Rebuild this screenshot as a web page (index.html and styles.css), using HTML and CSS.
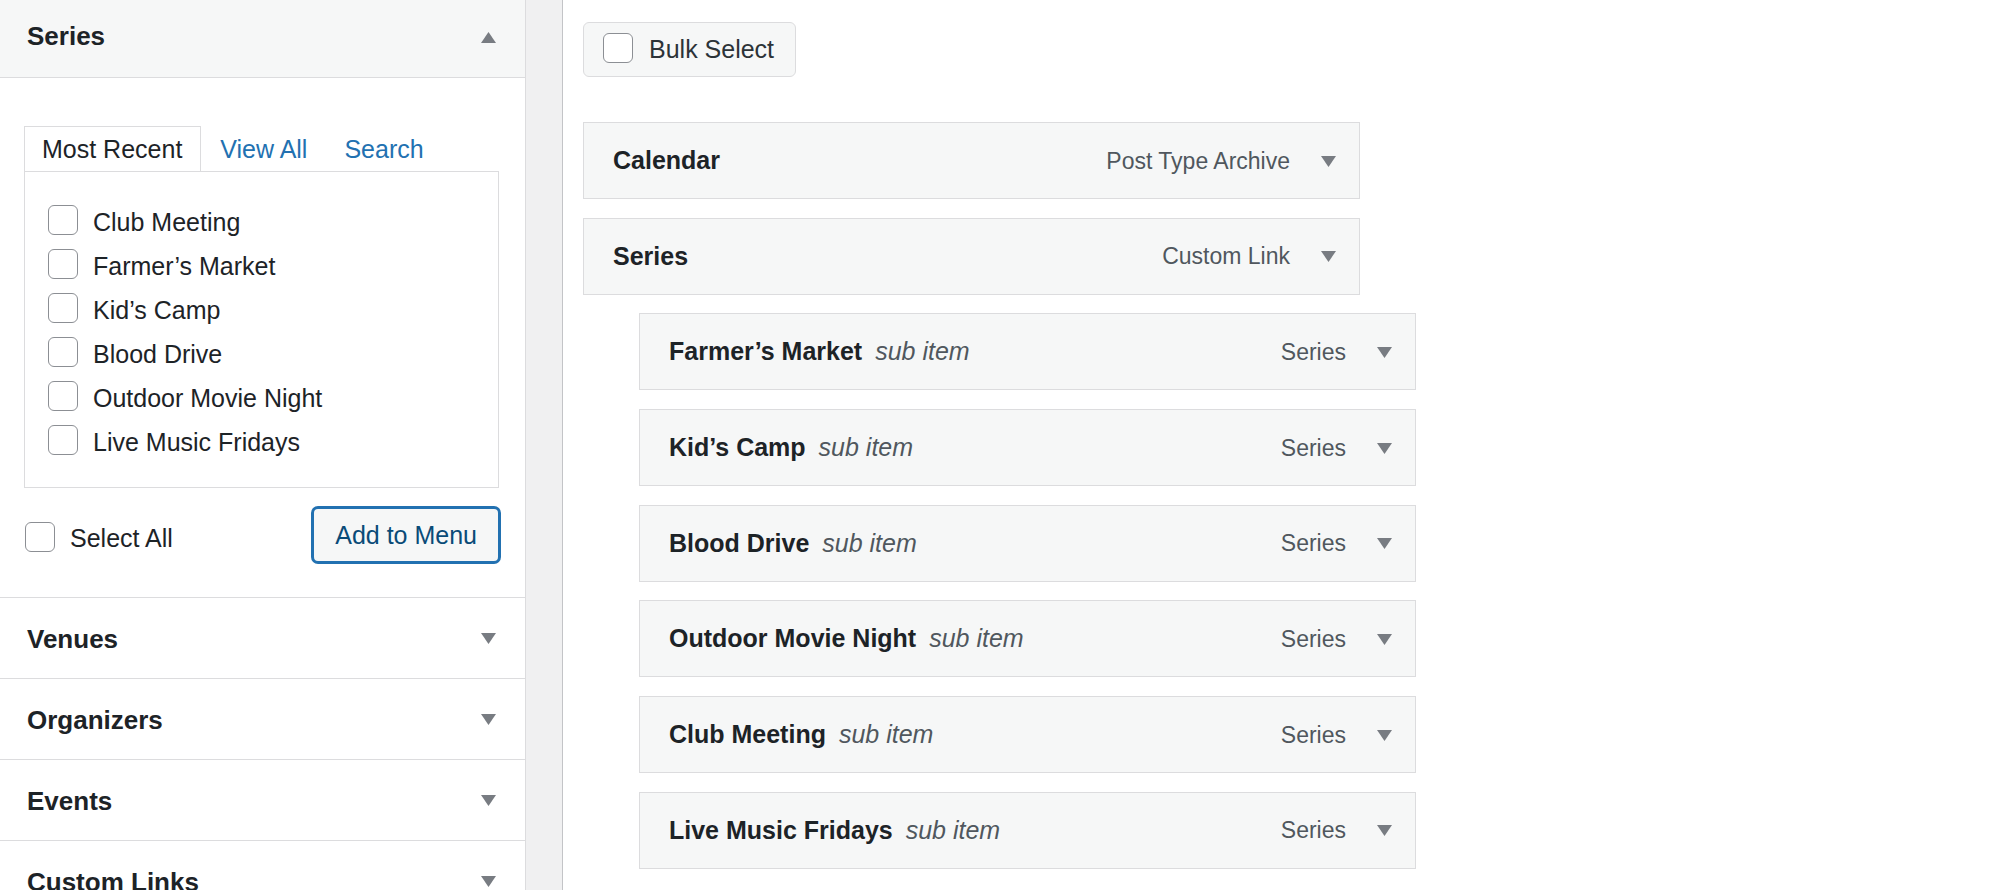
FILE: index.html
```html
<!DOCTYPE html>
<html lang="en">
<head>
<meta charset="utf-8">
<title>Menus</title>
<link rel="stylesheet" href="styles.css">
</head>
<body>
<div class="page">
  <aside class="sidebar">
    <section class="acc open">
      <div class="acc-head">
        <h3 class="acc-title">Series</h3>
        <svg class="tri" width="15" height="11" viewBox="0 0 15 11"><path d="M0 11H15L7.5 0Z" fill="#787c82"/></svg>
      </div>
      <div class="acc-body">
        <div class="tabs">
          <span class="tab active">Most Recent</span>
          <a class="tab link">View All</a>
          <a class="tab link second">Search</a>
        </div>
        <div class="panel">
          <label class="row"><input type="checkbox" class="cb"><span>Club Meeting</span></label>
          <label class="row"><input type="checkbox" class="cb"><span>Farmer’s Market</span></label>
          <label class="row"><input type="checkbox" class="cb"><span>Kid’s Camp</span></label>
          <label class="row"><input type="checkbox" class="cb"><span>Blood Drive</span></label>
          <label class="row"><input type="checkbox" class="cb"><span>Outdoor Movie Night</span></label>
          <label class="row"><input type="checkbox" class="cb"><span>Live Music Fridays</span></label>
        </div>
        <div class="footer">
          <label class="select-all"><input type="checkbox" class="cb"><span>Select All</span></label>
          <button class="add-btn" type="button">Add to Menu</button>
        </div>
      </div>
    </section>
    <section class="acc">
      <div class="acc-head closed">
        <h3 class="acc-title">Venues</h3>
        <svg class="tri" width="15" height="11" viewBox="0 0 15 11"><path d="M0 0H15L7.5 11Z" fill="#787c82"/></svg>
      </div>
    </section>
    <section class="acc">
      <div class="acc-head closed">
        <h3 class="acc-title">Organizers</h3>
        <svg class="tri" width="15" height="11" viewBox="0 0 15 11"><path d="M0 0H15L7.5 11Z" fill="#787c82"/></svg>
      </div>
    </section>
    <section class="acc">
      <div class="acc-head closed">
        <h3 class="acc-title">Events</h3>
        <svg class="tri" width="15" height="11" viewBox="0 0 15 11"><path d="M0 0H15L7.5 11Z" fill="#787c82"/></svg>
      </div>
    </section>
    <section class="acc">
      <div class="acc-head closed">
        <h3 class="acc-title">Custom Links</h3>
        <svg class="tri" width="15" height="11" viewBox="0 0 15 11"><path d="M0 0H15L7.5 11Z" fill="#787c82"/></svg>
      </div>
    </section>
  </aside>
  <div class="gutter"></div>
  <main class="main">
    <label class="bulk"><input type="checkbox" class="cb"><span>Bulk Select</span></label>
    <ul class="menu">
      <li class="item"><span class="item-title">Calendar</span><span class="item-ctrl"><span class="item-type">Post Type Archive</span><svg width="15" height="11" viewBox="0 0 15 11"><path d="M0 0H15L7.5 11Z" fill="#787c82"/></svg></span></li>
      <li class="item"><span class="item-title">Series</span><span class="item-ctrl"><span class="item-type">Custom Link</span><svg width="15" height="11" viewBox="0 0 15 11"><path d="M0 0H15L7.5 11Z" fill="#787c82"/></svg></span></li>
      <li class="item sub"><span class="item-title">Farmer’s Market<em class="subtag">sub item</em></span><span class="item-ctrl"><span class="item-type">Series</span><svg width="15" height="11" viewBox="0 0 15 11"><path d="M0 0H15L7.5 11Z" fill="#787c82"/></svg></span></li>
      <li class="item sub"><span class="item-title">Kid’s Camp<em class="subtag">sub item</em></span><span class="item-ctrl"><span class="item-type">Series</span><svg width="15" height="11" viewBox="0 0 15 11"><path d="M0 0H15L7.5 11Z" fill="#787c82"/></svg></span></li>
      <li class="item sub"><span class="item-title">Blood Drive<em class="subtag">sub item</em></span><span class="item-ctrl"><span class="item-type">Series</span><svg width="15" height="11" viewBox="0 0 15 11"><path d="M0 0H15L7.5 11Z" fill="#787c82"/></svg></span></li>
      <li class="item sub"><span class="item-title">Outdoor Movie Night<em class="subtag">sub item</em></span><span class="item-ctrl"><span class="item-type">Series</span><svg width="15" height="11" viewBox="0 0 15 11"><path d="M0 0H15L7.5 11Z" fill="#787c82"/></svg></span></li>
      <li class="item sub"><span class="item-title">Club Meeting<em class="subtag">sub item</em></span><span class="item-ctrl"><span class="item-type">Series</span><svg width="15" height="11" viewBox="0 0 15 11"><path d="M0 0H15L7.5 11Z" fill="#787c82"/></svg></span></li>
      <li class="item sub"><span class="item-title">Live Music Fridays<em class="subtag">sub item</em></span><span class="item-ctrl"><span class="item-type">Series</span><svg width="15" height="11" viewBox="0 0 15 11"><path d="M0 0H15L7.5 11Z" fill="#787c82"/></svg></span></li>
    </ul>
  </main>
</div>
</body>
</html>
```
FILE: styles.css
```css
* { box-sizing: border-box; }
html, body { margin: 0; padding: 0; }
body {
  background: #fff;
  color: #1d2327;
  font-family: "Liberation Sans", Arial, sans-serif;
  font-size: 25px;
  line-height: 30px;
}
.page {
  display: flex;
  height: 890px;
  overflow: hidden;
}

/* Sidebar */
.sidebar {
  width: 526px;
  flex: none;
  border-right: 1px solid #dcdcde;
  background: #fff;
}
.acc { border-bottom: 1px solid #dcdcde; }
.acc-head {
  display: flex;
  align-items: center;
  justify-content: space-between;
  height: 78px;
  padding: 0 29px 0 27px;
  background: #f6f7f7;
  border-bottom: 1px solid #dcdcde;
}
.acc-head.closed {
  height: 80px;
  background: #fff;
  border-bottom: 0;
}
.acc-title {
  margin: 0;
  font-size: 26px;
  font-weight: 700;
  line-height: 30px;
}
.acc-head .acc-title { margin-top: -5px; }
.acc-head.closed .acc-title { margin-top: 1px; }
.tri { display: block; flex: none; }
.acc.open .tri { margin-top: -3px; }

.acc-body {
  padding: 48px 0 33px 24px;
  height: 519px;
}
.tabs {
  display: flex;
  align-items: flex-end;
}
.tab {
  display: block;
  padding: 7px 18px 7px 17px;
  border: 1px solid transparent;
  border-bottom: 0;
  line-height: 30px;
}
.tab.active {
  border-color: #dcdcde;
  background: #fff;
  color: #1d2327;
}
.tab.link {
  color: #2271b1;
  padding-left: 0;
  padding-right: 0;
  margin-left: 18px;
  text-decoration: none;
}
.tab.link.second { margin-left: 35px; }

.panel {
  width: 475px;
  border: 1px solid #dcdcde;
  padding: 26px 0 25px 23px;
  background: #fff;
}
.row {
  display: flex;
  align-items: center;
  height: 44px;
  gap: 15px;
}
.row span { margin-top: 3px; }

.cb {
  appearance: none;
  -webkit-appearance: none;
  margin: 0;
  width: 30px;
  height: 30px;
  flex: none;
  border: 1.6px solid #8c8f94;
  border-radius: 6px;
  background: #fff;
}

.footer {
  display: flex;
  align-items: center;
  justify-content: space-between;
  width: 477px;
  margin-top: 18px;
  padding-left: 1px;
}
.select-all {
  display: flex;
  align-items: center;
  gap: 15px;
  margin-top: 3px;
}
.select-all span { margin-top: 2px; }
.add-btn {
  height: 58px;
  padding: 0 21px;
  border: 3px solid #2271b1;
  border-radius: 7px;
  background: #f6f7f7;
  color: #0a4b78;
  font: inherit;
  font-size: 25px;
  line-height: 30px;
}

/* Gutter */
.gutter {
  width: 37px;
  flex: none;
  background: #f0f0f1;
  border-right: 1px solid #c3c4c7;
}

/* Main */
.main {
  flex: 1;
  padding: 22px 0 0 20px;
}
.bulk {
  display: inline-flex;
  align-items: center;
  gap: 16px;
  height: 55px;
  padding: 0 21px 0 19px;
  border: 1px solid #dcdcde;
  border-radius: 6px;
  background: #f6f7f7;
  color: #2c3338;
}
.bulk .cb { margin-top: -3px; }
.bulk span { margin-top: -1px; }

.menu {
  list-style: none;
  margin: 45px 0 0;
  padding: 0;
  display: flex;
  flex-direction: column;
  gap: 18.7px;
}
.item {
  display: flex;
  align-items: center;
  justify-content: space-between;
  width: 777px;
  height: 77px;
  padding: 0 23px 0 29px;
  border: 1px solid #dcdcde;
  background: #f6f7f7;
}
.item.sub { margin-left: 56px; }
.item-title {
  font-weight: 700;
  color: #1d2327;
  margin-top: -1px;
}
.subtag {
  font-weight: 400;
  font-style: italic;
  color: #50575e;
  margin-left: 13px;
}
.item-ctrl {
  display: flex;
  align-items: center;
  gap: 31px;
}
.item-type {
  font-size: 23px;
  color: #50575e;
}
.item-ctrl svg { display: block; margin-top: 1px; }
```
